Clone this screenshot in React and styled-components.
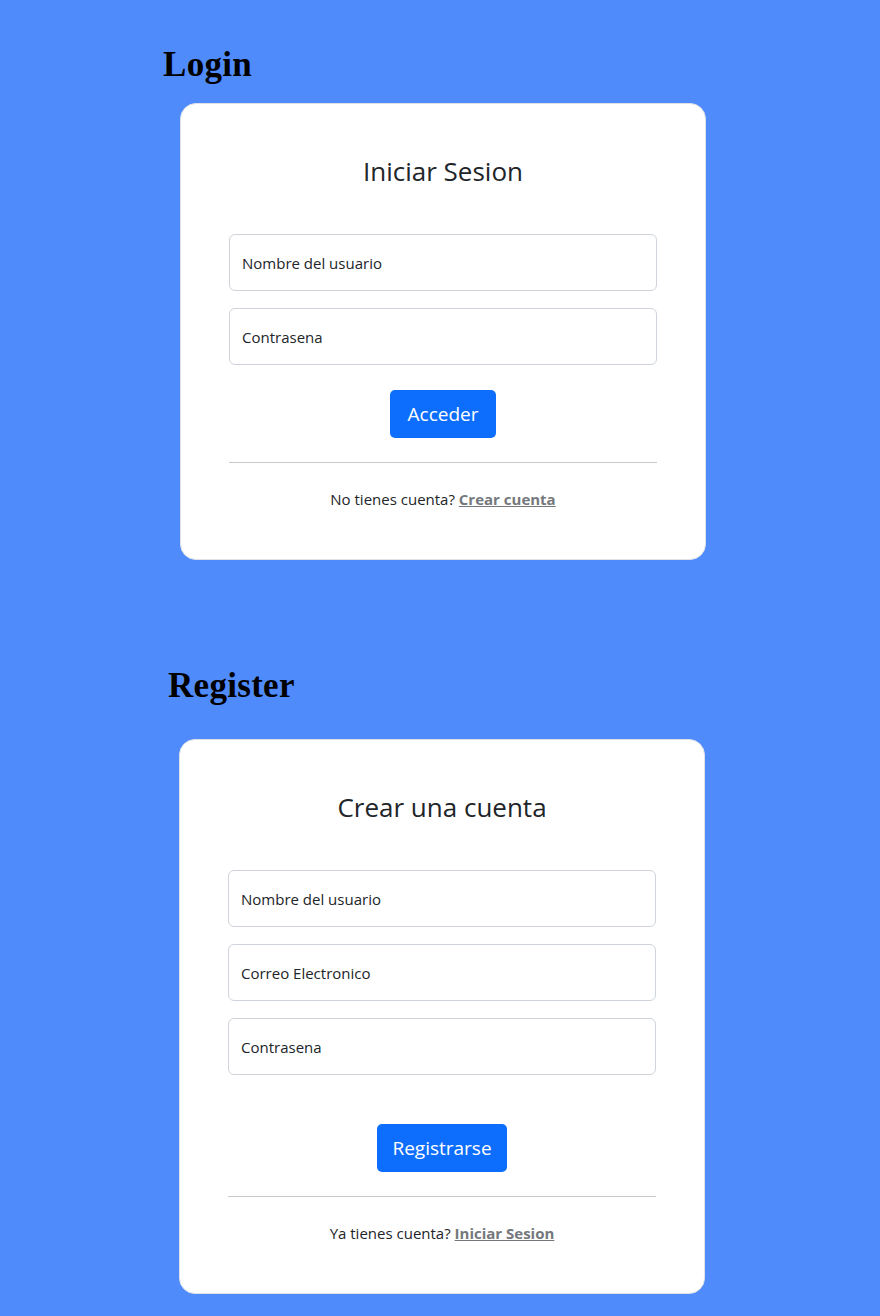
import React from 'react';
import styled, { createGlobalStyle } from 'styled-components';

/* ------------------------------ Global styles ----------------------------- */
const GlobalStyle = createGlobalStyle`
	* {
		box-sizing: border-box;
	}
	html,
	body {
		margin: 0;
		padding: 0;
		background: #508bfc;
	}
	body {
		font-family: 'Open Sans', 'Noto Sans', Arial, sans-serif;
		color: #212529;
	}
`;

const Page = styled.main`
	display: flex;
	flex-direction: column;
	padding: 45px 0 23px;
	min-height: 1316px;
`;

const Section = styled.section`
	display: flex;
	flex-direction: column;
	margin-top: ${({ gap }) => gap || 0}px;
`;

const PageTitle = styled.h1`
	margin: 0 0 ${({ below }) => below}px ${({ indent }) => indent}px;
	font-family: 'Liberation Serif', 'Times New Roman', serif;
	font-weight: bold;
	font-size: 35px;
	line-height: 40px;
	letter-spacing: 0.3px;
	color: #000;
`;

const Card = styled.div`
	width: 526px;
	margin-left: ${({ indent }) => indent}px;
	background: #fff;
	border: 1px solid #dee2e6;
	border-radius: 16px;
	padding: ${({ pad }) => pad}px 48px 48px;
	display: flex;
	flex-direction: column;
`;

const CardTitle = styled.h2`
	margin: 0 0 47px;
	text-align: center;
	font-weight: 400;
	font-size: 26px;
	line-height: 32px;
	color: #212529;
`;

const Fields = styled.div`
	display: flex;
	flex-direction: column;
	gap: 17px;
`;

const Input = styled.input`
	display: block;
	width: 100%;
	height: 57px;
	padding: 0 12px;
	border: 1px solid #ced4da;
	border-radius: 6px;
	font-family: inherit;
	font-size: 15px;
	color: #212529;
	background: #fff;
	outline: none;
	&::placeholder {
		color: #212529;
		opacity: 1;
	}
`;

const Actions = styled.div`
	display: flex;
	justify-content: center;
	margin-top: ${({ gap }) => gap}px;
`;

const Button = styled.button`
	height: 48px;
	padding: 0 ${({ wide }) => (wide ? 18 : 15)}px;
	border: 0;
	border-radius: 5px;
	background: #0d6efd;
	color: #fff;
	font-family: inherit;
	font-size: 19px;
	cursor: pointer;
`;

const Divider = styled.hr`
	margin: 24px 0 0;
	border: 0;
	border-top: 1px solid #c8c9cb;
`;

const Footer = styled.p`
	margin: 24px 0 0;
	text-align: center;
	font-size: 15px;
	line-height: 24px;
`;

const FooterLink = styled.a`
	font-weight: 700;
	color: #74787c;
	text-decoration: underline;
`;

const App = () => (
	<>
		<GlobalStyle />
		<Page>
			<Section>
				<PageTitle indent={163} below={18}>
					Login
				</PageTitle>
				<Card indent={180} pad={51}>
					<CardTitle>Iniciar Sesion</CardTitle>
					<Fields>
						<Input type="text" placeholder="Nombre del usuario" />
						<Input type="password" placeholder="Contrasena" />
					</Fields>
					<Actions gap={25}>
						<Button type="button" wide>
							Acceder
						</Button>
					</Actions>
					<Divider />
					<Footer>
						No tienes cuenta? <FooterLink href="#register">Crear cuenta</FooterLink>
					</Footer>
				</Card>
			</Section>
			<Section gap={106}>
				<PageTitle indent={168} below={33}>
					Register
				</PageTitle>
				<Card indent={179} pad={51}>
					<CardTitle>Crear una cuenta</CardTitle>
					<Fields>
						<Input type="text" placeholder="Nombre del usuario" />
						<Input type="email" placeholder="Correo Electronico" />
						<Input type="password" placeholder="Contrasena" />
					</Fields>
					<Actions gap={49}>
						<Button type="button">Registrarse</Button>
					</Actions>
					<Divider />
					<Footer>
						Ya tienes cuenta? <FooterLink href="#login">Iniciar Sesion</FooterLink>
					</Footer>
				</Card>
			</Section>
		</Page>
	</>
);

export default App;
